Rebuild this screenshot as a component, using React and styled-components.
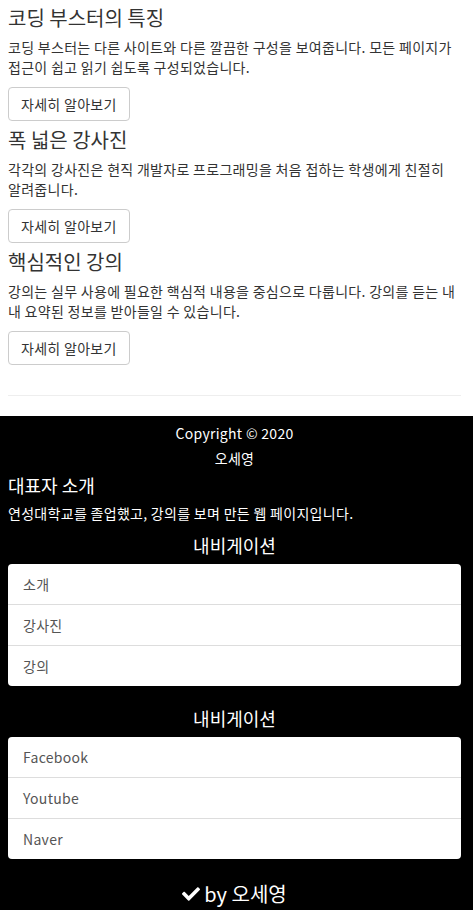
import React from 'react';
import styled, { createGlobalStyle } from 'styled-components';
import { FaCheck } from 'react-icons/fa';

const GlobalStyle = createGlobalStyle`
  body {
    margin: 0;
    background: #fff;
    font-family: "Noto Sans CJK KR", "Noto Sans", sans-serif;
    font-size: 14px;
    line-height: 20px;
    letter-spacing: 0.3px;
    word-break: keep-all;
    color: #333;
  }
`;

const Main = styled.main`
  padding: 0 12px 0 8px;
`;

const Feature = styled.section`
  padding-top: 5px;
  & + & {
    padding-top: 6px;
  }
`;

const Heading = styled.h3`
  margin: 0 0 7px;
  font-size: 20px;
  line-height: 25px;
  font-weight: 400;
  letter-spacing: 0;
  color: #333;
`;

const Text = styled.p`
  margin: 0 0 10px;
`;

const MoreButton = styled.button`
  display: inline-block;
  height: 34px;
  padding: 6px 12px;
  font-family: inherit;
  font-size: 14px;
  line-height: 20px;
  letter-spacing: 0.3px;
  color: #333;
  background: #fff;
  border: 1px solid #ccc;
  border-radius: 4px;
  cursor: pointer;
`;

const Divider = styled.hr`
  margin: 30px 0 20px;
  border: 0;
  border-top: 1px solid #eee;
`;

const Footer = styled.footer`
  background: #000;
  color: #fff;
  padding: 7px 12px 6px 8px;
`;

const CenterLine = styled.p`
  margin: 0 0 5px;
  text-align: center;
`;

const FooterHeading = styled.h4`
  margin: 0 0 5px;
  font-size: 18px;
  line-height: 25px;
  font-weight: 400;
  letter-spacing: 0;
  text-align: ${(p) => (p.$center ? 'center' : 'left')};
`;

const ListGroup = styled.ul`
  list-style: none;
  margin: 6px 0 20px;
  padding: 0;
  background: #fff;
  border-radius: 4px;
  overflow: hidden;
`;

const ListItem = styled.li`
  padding: 10px 15px;
  color: #555;
  border-bottom: 1px solid #ddd;
  &:last-child {
    border-bottom: 0;
  }
`;

const Signature = styled.div`
  display: flex;
  align-items: center;
  justify-content: center;
  gap: 4px;
  font-size: 20px;
  line-height: 28px;
  letter-spacing: 0;
  padding-top: 1px;
`;

const features = [
  {
    title: '코딩 부스터의 특징',
    text: '코딩 부스터는 다른 사이트와 다른 깔끔한 구성을 보여줍니다. 모든 페이지가 접근이 쉽고 읽기 쉽도록 구성되었습니다.'
  },
  {
    title: '폭 넓은 강사진',
    text: '각각의 강사진은 현직 개발자로 프로그래밍을 처음 접하는 학생에게 친절히 알려줍니다.'
  },
  {
    title: '핵심적인 강의',
    text: (
      <>
        강의는 실무 사용에 필요한 핵심적 내용을 중심으로 다룹니다. 강의를 듣는 내<wbr />내 요약된 정보를 받아들일 수 있습니다.
      </>
    )
  }
];

const navLinks = ['소개', '강사진', '강의'];
const snsLinks = ['Facebook', 'Youtube', 'Naver'];

function App() {
  return (
    <>
      <GlobalStyle />
      <Main>
        {features.map((feature) => (
          <Feature key={feature.title}>
            <Heading>{feature.title}</Heading>
            <Text>{feature.text}</Text>
            <MoreButton>자세히 알아보기</MoreButton>
          </Feature>
        ))}
        <Divider />
      </Main>
      <Footer>
        <CenterLine>Copyright © 2020</CenterLine>
        <CenterLine>오세영</CenterLine>
        <FooterHeading>대표자 소개</FooterHeading>
        <Text>연성대학교를 졸업했고, 강의를 보며 만든 웹 페이지입니다.</Text>
        <FooterHeading $center>내비게이션</FooterHeading>
        <ListGroup>
          {navLinks.map((item) => (
            <ListItem key={item}>{item}</ListItem>
          ))}
        </ListGroup>
        <FooterHeading $center>내비게이션</FooterHeading>
        <ListGroup>
          {snsLinks.map((item) => (
            <ListItem key={item}>{item}</ListItem>
          ))}
        </ListGroup>
        <Signature>
          <FaCheck size={18} />
          <span>by 오세영</span>
        </Signature>
      </Footer>
    </>
  );
}

export default App;
